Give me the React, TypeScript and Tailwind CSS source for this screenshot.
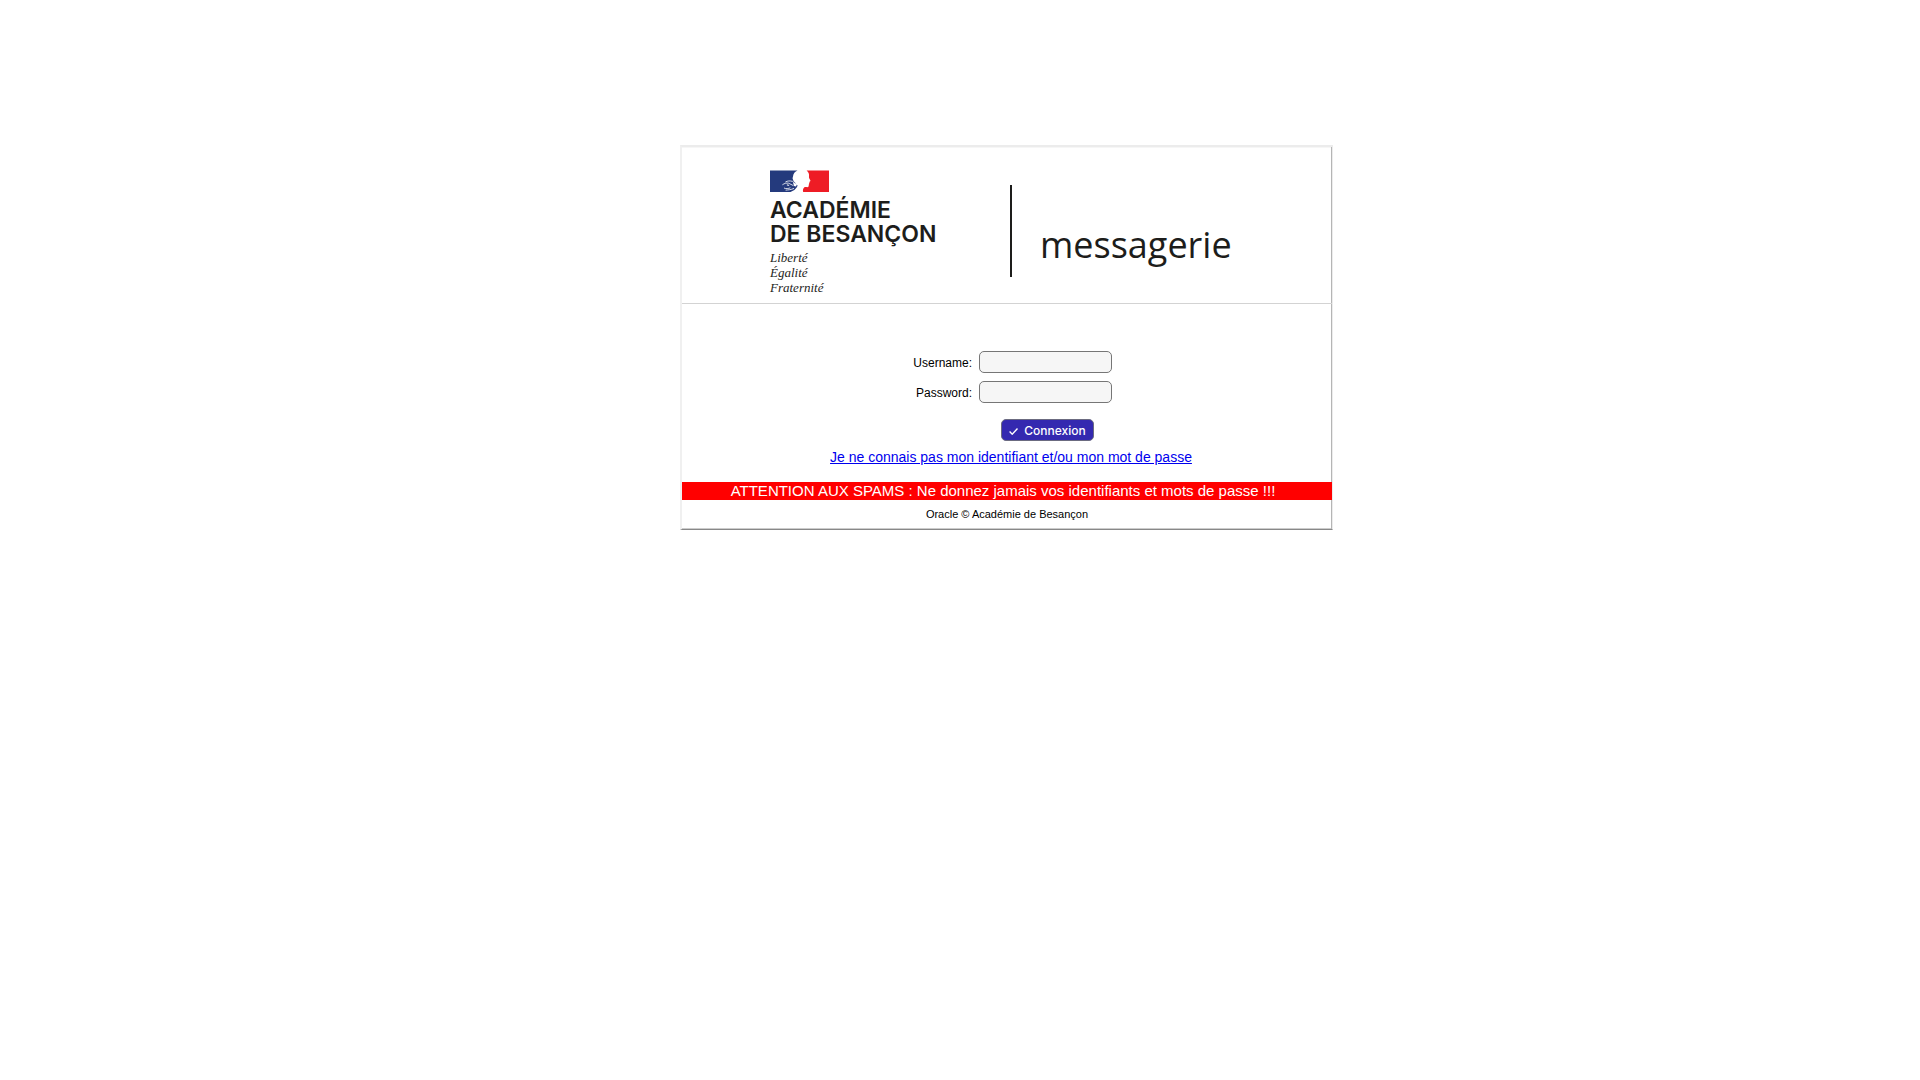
import { useState } from 'react';
import type { FormEvent } from 'react';

const MOTTO = ['Liberté', 'Égalité', 'Fraternité'];

interface FieldProps {
  id: string;
  label: string;
  type: string;
  value: string;
  onChange: (value: string) => void;
}

function Field({ id, label, type, value, onChange }: FieldProps) {
  return (
    <>
      <label htmlFor={id} className="pt-[2px] text-right text-xs text-black">
        {label}
      </label>
      <input
        id={id}
        name={id}
        type={type}
        value={value}
        onChange={(e) => onChange(e.target.value)}
        className="h-[22px] w-[133px] rounded-[5px] border border-[#767676] bg-[#f6f6f6] px-1 text-xs"
      />
    </>
  );
}

// Tricolour block with the Marianne profile
function Flag() {
  return (
    <svg viewBox="0 0 59 22" className="h-[22px] w-[59px]" aria-hidden="true">
      <path fill="#243a7d" d="M0 0.5H27.5C25 1.4 23.2 3.6 23 6.4L22.6 8C22.5 9 23.3 9.6 23.3 10.6C23.6 11.8 25 12.4 26 14L27.6 15.6C27 17.8 25.6 18.8 24.4 20L20.5 22H0Z" />
      <path fill="#ee1c25" d="M59 0.5V22H33.2C32.6 20.6 33 18 34.4 17.2C36 16.8 37.8 17.6 38.4 16.8C39 16 38.6 15.2 38.8 14.6C39.4 14.2 39.2 13.6 39 13.2C39.8 12.6 39.4 12 39.8 11.6C40.6 11.2 40.6 10.6 40 9.8C39.2 8.6 38.8 7.8 39 6.6C39.4 4 38.4 1.8 36.6 0.5Z" />
      <path
        fill="none"
        stroke="#fff"
        strokeWidth="0.8"
        d="M15.4 12C17.4 10.8 20 10.6 22.6 11.4L26 14.6M12.4 14.8C14.4 13.4 16.4 12.8 18.6 13.2L23.4 15.6M14 18C16 19 18.4 18.6 20.4 17.8M15.6 20.2C18.4 19.8 21 19.8 24 18.4"
      />
      <path fill="#fff" d="M16.6 15C17.2 14.4 18.6 14.4 19.4 15.2C18.6 16 17.4 16 16.6 15ZM23 12.4L27 14.2L26 16.6L24 16Z" />
    </svg>
  );
}

function Header() {
  return (
    <header className="flex border-b border-[#d3d3d3] pt-[23px] pb-2 pl-[88px] text-[#1d1d1b]">
      <div className="w-[240px]">
        <Flag />
        <p className="mt-[6px] font-['Inter',sans-serif] text-[23px] leading-6 font-semibold">
          ACADÉMIE
          <br />
          DE BESANÇON
        </p>
        <ul className="mt-1 font-['Liberation_Serif',serif] text-[13px] leading-[15px] italic">
          {MOTTO.map((word) => (
            <li key={word}>{word}</li>
          ))}
        </ul>
      </div>
      <div className="mt-[15px] h-[92px] w-[2px] bg-[#1d1d1b]" />
      <h1 className="mt-[50px] ml-7 font-['Open_Sans',sans-serif] text-[36px] leading-[50px] font-medium">
        messagerie
      </h1>
    </header>
  );
}

export default function App() {
  const [username, setUsername] = useState('');
  const [password, setPassword] = useState('');

  const handleSubmit = (e: FormEvent) => {
    e.preventDefault();
  };

  return (
    <main className="bg-white pt-[145px] pl-[35%] font-['Liberation_Sans',Arial,sans-serif]">
      <div className="ml-2 max-w-[653px] border-t-2 border-r border-b border-l-2 border-t-[#ececec] border-r-[#ececec] border-b-[#888888] border-l-[#f0f0f0] shadow-[inset_-1px_0_#b5b5b5,inset_0_-1px_#cccccc,inset_0_1px_#f6f6f6]">
        <Header />

        <form onSubmit={handleSubmit} className="pt-[47px]">
          <div className="grid grid-cols-[290px_auto] items-center gap-x-[7px] gap-y-2">
            <Field id="username" label="Username:" type="text" value={username} onChange={setUsername} />
            <Field id="password" label="Password:" type="password" value={password} onChange={setPassword} />
          </div>
          <button
            type="submit"
            className="mt-4 ml-[319px] flex h-[22px] w-[93px] items-center justify-center gap-[6px] rounded-[5px] border border-[#6b6b80] bg-[#3429b0] pt-[2px] font-['Inter',sans-serif] text-xs font-medium text-white"
          >
            <svg viewBox="0 0 9 7" className="h-[7px] w-[9px]" fill="none" stroke="currentColor" strokeWidth="1.4" aria-hidden="true">
              <path d="M0.6 3.6L3.2 6.2L8.5 0.6" />
            </svg>
            Connexion
          </button>
        </form>

        <p className="mt-2 mb-[17px] pl-2 text-center text-sm leading-4">
          <a href="#" className="text-[#0000ee] underline">
            Je ne connais pas mon identifiant et/ou mon mot de passe
          </a>
        </p>

        <p className="bg-[#ff0000] pr-2 text-center text-[15px] leading-[18px] text-white">
          ATTENTION AUX SPAMS : Ne donnez jamais vos identifiants et mots de passe !!!
        </p>

        <footer className="py-2 text-center text-[11px] leading-[13px] text-black">
          Oracle © Académie de Besançon
        </footer>
      </div>
    </main>
  );
}
